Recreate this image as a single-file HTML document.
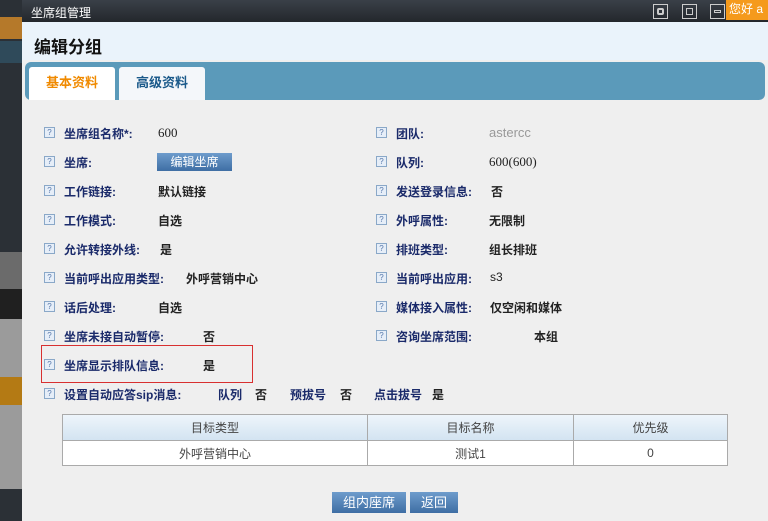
<!DOCTYPE html>
<html><head><meta charset="utf-8"><style>
*{margin:0;padding:0;box-sizing:border-box}
body{width:768px;height:521px;overflow:hidden;position:relative;background:#efefef;font-family:"Liberation Sans","Noto Sans CJK SC",sans-serif;font-size:12px}
.a{position:absolute}
.lbl{position:absolute;font-weight:bold;color:#1a2a6a;font-size:12px;white-space:nowrap}
.val{position:absolute;color:#222;font-weight:bold;font-size:12px;white-space:nowrap}
.ic{position:absolute;width:11px;height:11px;border:1px solid #8aa8c8;background:#e6eef8;color:#5577aa;font-size:8px;line-height:9px;text-align:center}
td{border:1px solid #aaa;text-align:center;color:#444;font-size:12px}
.wb{position:absolute;top:4px;width:15px;height:15px;border:1px solid #ccc}
</style></head><body>
<div class="a" style="left:0;top:0;width:22px;height:521px;background:#2b3036"></div>
<div class="a" style="left:0;top:17px;width:22px;height:22px;background:#b5792a"></div>
<div class="a" style="left:0;top:41px;width:22px;height:22px;background:#2f4a5a"></div>
<div class="a" style="left:0;top:252px;width:22px;height:37px;background:#6b6b6b"></div>
<div class="a" style="left:0;top:289px;width:22px;height:30px;background:#202020"></div>
<div class="a" style="left:0;top:319px;width:22px;height:170px;background:#9b9b9b"></div>
<div class="a" style="left:0;top:377px;width:22px;height:28px;background:#b47a14"></div>
<div class="a" style="left:0;top:490px;width:22px;height:31px;background:#2b3036"></div>
<div class="a" style="left:22px;top:0;width:746px;height:22px;background:linear-gradient(#3a4048,#23272c)"></div>
<div class="a" style="left:31px;top:4px;color:#fff;font-size:12px">坐席组管理</div>
<div class="wb" style="left:653px"><div class="a" style="left:3px;top:3px;width:7px;height:7px;border:2px solid #ccc;border-radius:2px"></div></div>
<div class="wb" style="left:682px"><div class="a" style="left:3px;top:3px;width:7px;height:7px;border:1px solid #ccc"></div></div>
<div class="wb" style="left:710px"><div class="a" style="left:3px;top:5px;width:7px;height:3px;border:1px solid #ccc"></div></div>
<div class="a" style="left:726px;top:0;width:42px;height:20px;background:#f59a1c;color:#fff;font-size:12px;padding:0 3px">您好 a</div>
<div class="a" style="left:22px;top:22px;width:746px;height:38px;background:#eaf3fb"></div>
<div class="a" style="left:34px;top:33px;font-size:17px;font-weight:bold;color:#111">编辑分组</div>
<div class="a" style="left:25px;top:62px;width:740px;height:38px;background:#5b9aba;border-radius:6px"></div>
<div class="a" style="left:29px;top:67px;width:86px;height:33px;background:#fff;border-radius:3px 3px 0 0;color:#f08a00;font-weight:bold;font-size:13px;text-align:center;line-height:32px">基本资料</div>
<div class="a" style="left:119px;top:67px;width:86px;height:33px;background:#f4f7fa;border-radius:3px 3px 0 0;color:#1b5a8a;font-weight:bold;font-size:13px;text-align:center;line-height:32px">高级资料</div>

<div class="ic" style="left:44px;top:127px">?</div><div class="lbl" style="left:64px;top:125px">坐席组名称*:</div><div class="val" style="left:158px;top:125px;font-weight:normal;font-family:'Liberation Serif',serif;font-size:13px">600</div>
<div class="ic" style="left:44px;top:156px">?</div><div class="lbl" style="left:64px;top:154px">坐席:</div><div class="a" style="left:157px;top:153px;width:75px;height:18px;background:linear-gradient(#6e9ccc,#3e6ea4);color:#fff;text-align:center;line-height:18px;font-size:12px">编辑坐席</div>
<div class="ic" style="left:44px;top:185px">?</div><div class="lbl" style="left:64px;top:183px">工作链接:</div><div class="val" style="left:158px;top:183px">默认链接</div>
<div class="ic" style="left:44px;top:214px">?</div><div class="lbl" style="left:64px;top:212px">工作模式:</div><div class="val" style="left:158px;top:212px">自选</div>
<div class="ic" style="left:44px;top:243px">?</div><div class="lbl" style="left:64px;top:241px">允许转接外线:</div><div class="val" style="left:160px;top:241px">是</div>
<div class="ic" style="left:44px;top:272px">?</div><div class="lbl" style="left:64px;top:270px">当前呼出应用类型:</div><div class="val" style="left:186px;top:270px">外呼营销中心</div>
<div class="ic" style="left:44px;top:301px">?</div><div class="lbl" style="left:64px;top:299px">话后处理:</div><div class="val" style="left:158px;top:299px">自选</div>
<div class="ic" style="left:44px;top:330px">?</div><div class="lbl" style="left:64px;top:328px">坐席未接自动暂停:</div><div class="val" style="left:203px;top:328px">否</div>
<div class="a" style="left:41px;top:345px;width:212px;height:38px;border:1px solid #d83030"></div>
<div class="ic" style="left:44px;top:359px">?</div><div class="lbl" style="left:64px;top:357px">坐席显示排队信息:</div><div class="val" style="left:203px;top:357px">是</div>
<div class="ic" style="left:44px;top:388px">?</div><div class="lbl" style="left:64px;top:386px">设置自动应答sip消息:</div>
<div class="lbl" style="left:218px;top:386px">队列</div><div class="val" style="left:255px;top:386px">否</div>
<div class="lbl" style="left:290px;top:386px">预拔号</div><div class="val" style="left:340px;top:386px">否</div>
<div class="lbl" style="left:374px;top:386px">点击拔号</div><div class="val" style="left:432px;top:386px">是</div>

<div class="ic" style="left:376px;top:127px">?</div><div class="lbl" style="left:396px;top:125px">团队:</div><div class="val" style="left:489px;top:125px;color:#999;font-weight:normal;font-size:13px">astercc</div>
<div class="ic" style="left:376px;top:156px">?</div><div class="lbl" style="left:396px;top:154px">队列:</div><div class="val" style="left:489px;top:154px;font-weight:normal;font-family:'Liberation Serif',serif;font-size:13px">600(600)</div>
<div class="ic" style="left:376px;top:185px">?</div><div class="lbl" style="left:396px;top:183px">发送登录信息:</div><div class="val" style="left:491px;top:183px">否</div>
<div class="ic" style="left:376px;top:214px">?</div><div class="lbl" style="left:396px;top:212px">外呼属性:</div><div class="val" style="left:489px;top:212px">无限制</div>
<div class="ic" style="left:376px;top:243px">?</div><div class="lbl" style="left:396px;top:241px">排班类型:</div><div class="val" style="left:489px;top:241px">组长排班</div>
<div class="ic" style="left:376px;top:272px">?</div><div class="lbl" style="left:396px;top:270px">当前呼出应用:</div><div class="val" style="left:490px;top:270px;font-weight:normal">s3</div>
<div class="ic" style="left:376px;top:301px">?</div><div class="lbl" style="left:396px;top:299px">媒体接入属性:</div><div class="val" style="left:490px;top:299px">仅空闲和媒体</div>
<div class="ic" style="left:376px;top:330px">?</div><div class="lbl" style="left:396px;top:328px">咨询坐席范围:</div><div class="val" style="left:534px;top:328px">本组</div>

<table class="a" style="left:62px;top:414px;width:666px;border-collapse:collapse">
<tr style="height:26px;background:linear-gradient(#eef5fb,#d2e3f1)"><td style="width:305px">目标类型</td><td style="width:206px">目标名称</td><td>优先级</td></tr>
<tr style="height:25px;background:#fff"><td>外呼营销中心</td><td>测试1</td><td>0</td></tr>
</table>
<div class="a" style="left:332px;top:492px;width:74px;height:21px;background:linear-gradient(#6e9ccc,#3e6ea4);color:#fff;text-align:center;line-height:21px;font-size:13px">组内座席</div>
<div class="a" style="left:410px;top:492px;width:48px;height:21px;background:linear-gradient(#6e9ccc,#3e6ea4);color:#fff;text-align:center;line-height:21px;font-size:13px">返回</div>
</body></html>
